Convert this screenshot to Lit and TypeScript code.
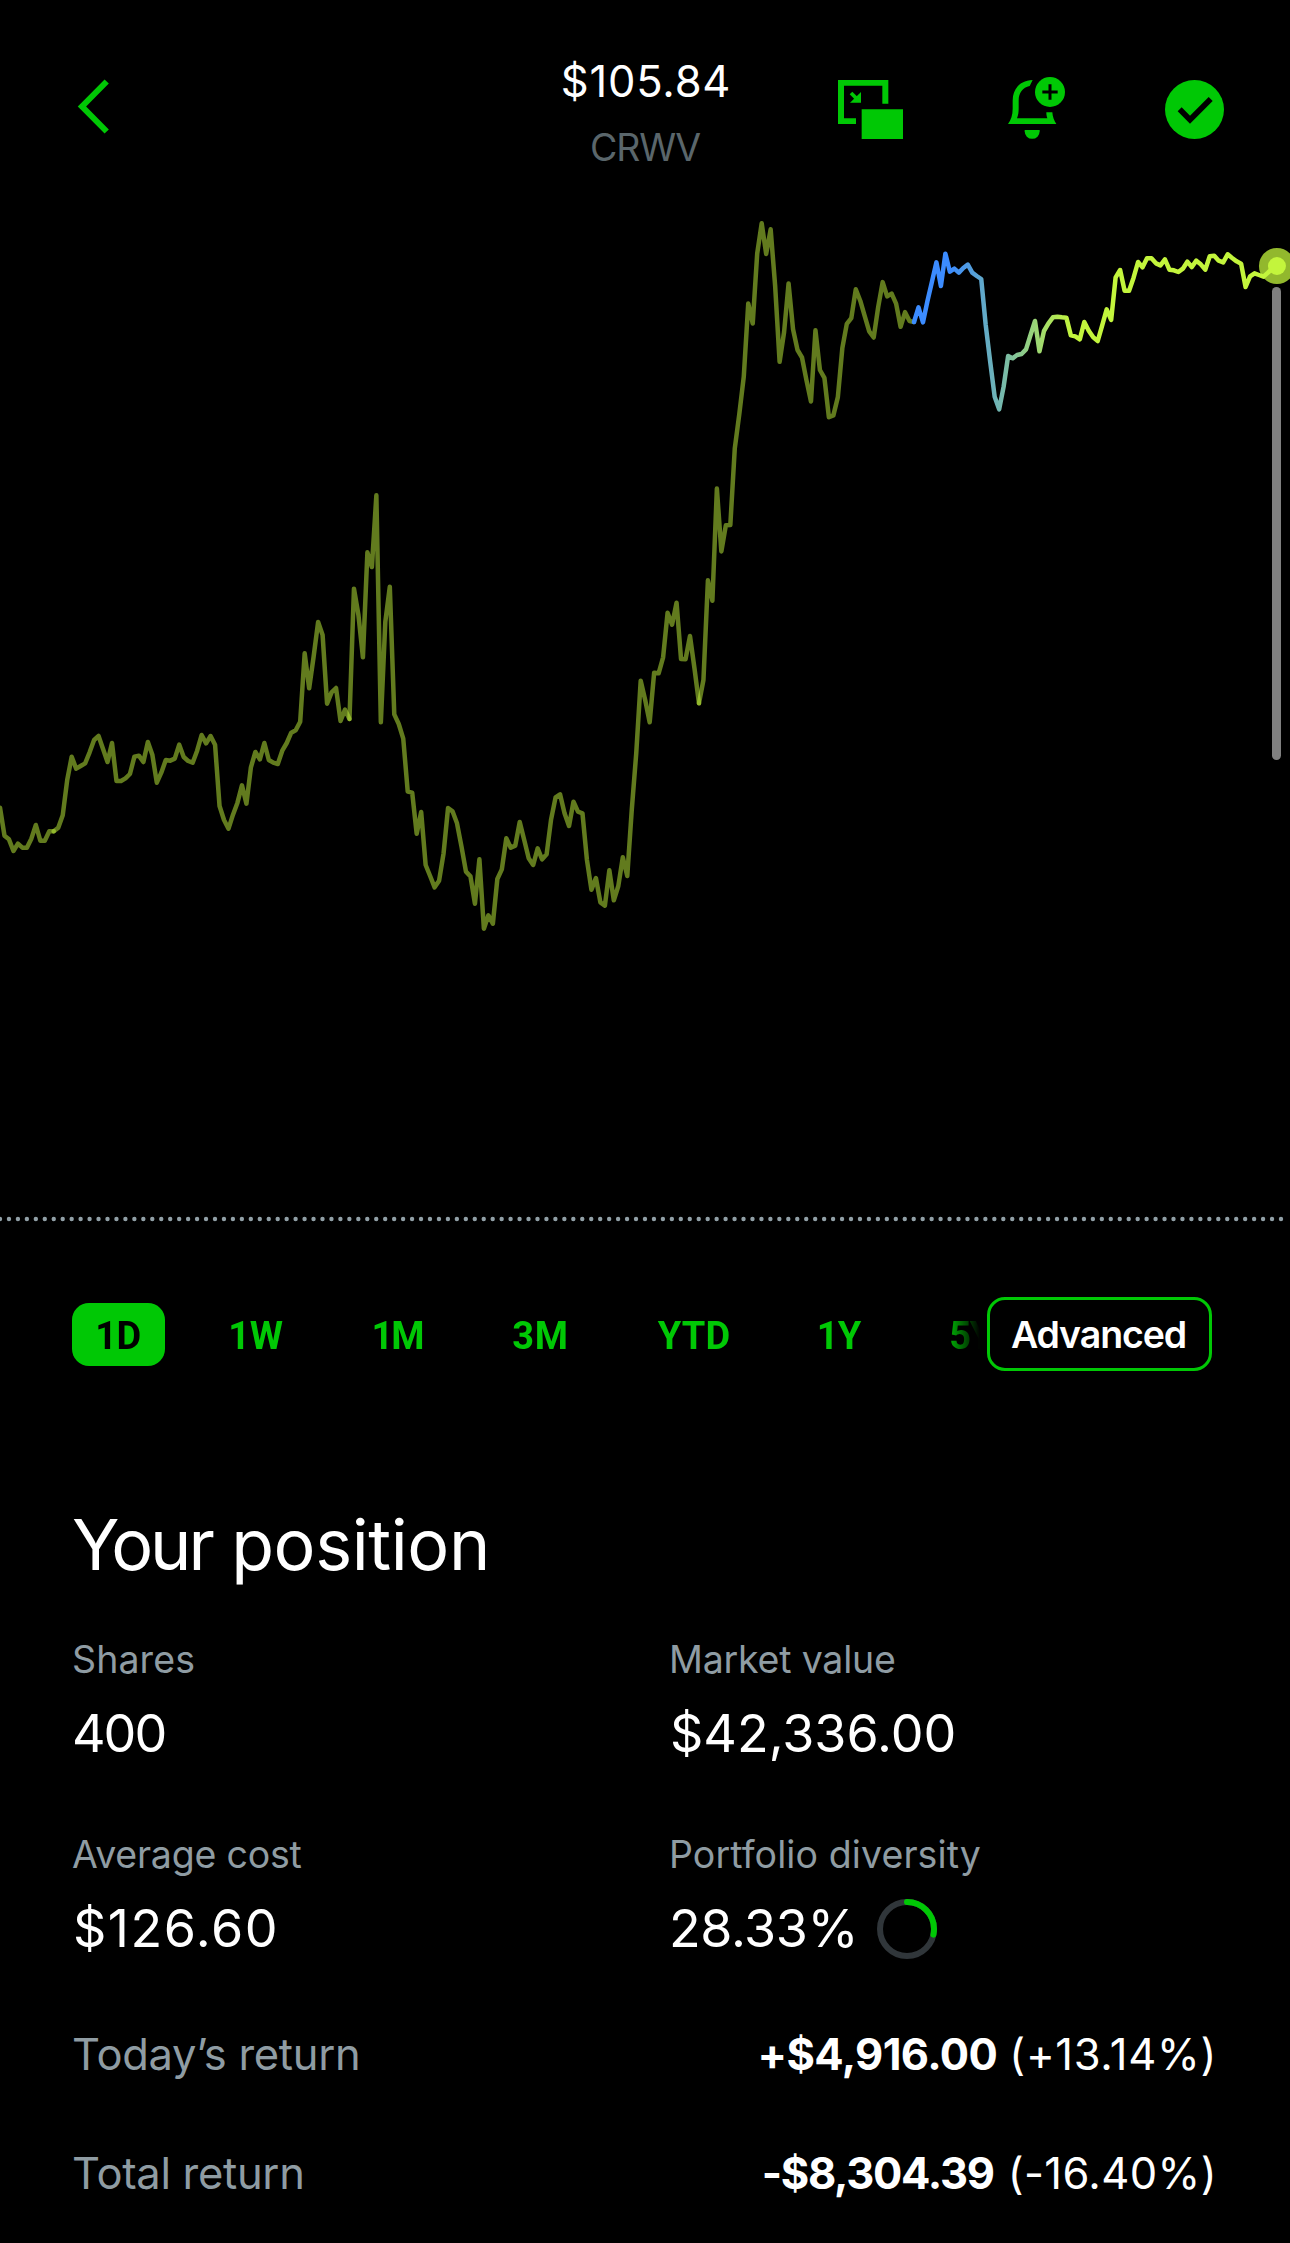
import { LitElement, html, svg, css } from "lit";
import { customElement, property } from "lit/decorators.js";
import { classMap } from "lit/directives/class-map.js";
import { styleMap } from "lit/directives/style-map.js";

/** Horizontal distance between two price samples. */
const STEP = 4.4805;

/** Price samples of the day as vertical canvas positions. */
const SAMPLES = [
  // each block is stored in fractions of a pixel relative to its own origin
  {
    origin: 460,
    scale: 3,
    values: [
      1043, 1127, 1138, 1173, 1151, 1163, 1163, 1136, 1095, 1142, 1142, 1114, 1114, 1103, 1066, 960, 890, 926, 918,
      910, 877, 840, 828, 867, 906, 849, 963, 963, 955, 942, 890, 887, 906, 846, 884, 968, 938, 900, 902, 896, 854,
      891, 903, 908, 872, 825, 850, 828, 854, 1038, 1080, 1106, 1064, 1028, 976, 1031, 922, 876, 898, 849, 900, 908,
      912, 872, 849, 818, 811, 785, 580, 685, 590, 486, 525, 731, 697, 684, 783, 749, 777, 386, 465, 592, 277, 321,
      106, 787, 485, 380, 763, 792, 836, 995, 998, 1121, 1056, 1215, 1248, 1282, 1262, 1180, 1044, 1054, 1090, 1160,
      1235, 1249, 1331, 1198, 1406, 1366, 1391, 1257, 1228, 1135, 1163, 1157, 1086, 1140, 1195, 1215, 1165, 1198,
      1183, 1078, 1012, 1003, 1060, 1098, 1025, 1055, 1060, 1200, 1289, 1254, 1327, 1337, 1231, 1321, 1278, 1192,
      1248, 1050, 880, 662, 720, 787, 638, 640, 592, 458, 494, 428, 597, 598, 528, 625, 730, 660,
    ],
  },
  {
    origin: 200,
    scale: 2.8,
    values: [
      1065, 1122, 808, 984, 911, 910, 695, 600, 495, 290, 346, 150, 65, 151, 82, 240, 453, 370, 234, 362, 420, 441,
      505, 564, 365, 476, 498, 608, 603, 552, 415, 347, 331, 250, 282, 325, 368, 385, 300, 230, 270, 262, 290, 355,
      314, 339,
    ],
  },
  {
    origin: 220,
    scale: 3,
    values: [
      306, 262, 307, 243, 185, 127, 198, 101, 155, 146, 158, 144, 134, 158, 168, 177, 315, 425, 530, 568, 500, 408,
      415, 405, 402, 388, 345, 303, 394, 333, 310, 292, 290, 292, 293, 346, 349, 358, 306, 332, 352, 363, 316, 268,
      300, 172, 150, 212, 212, 173, 126, 142, 115, 115, 130, 136, 118, 149, 151, 156, 146, 125, 141, 122, 133, 149,
      109, 107, 122, 127, 103, 114, 124, 131, 201, 169, 160, 165, 170, 158, 145, 138,
    ],
  },
].flatMap((b) => b.values.map((v) => b.origin + v / b.scale));

/** Sample indexes where one trading session hands over to the next. */
const SESSIONS = [0, 12, 78, 156, 204];

const slice = (from: number, to: number) =>
  SAMPLES.slice(from, to + 1)
    .map((y, i) => `${((from + i) * STEP).toFixed(2)},${y.toFixed(2)}`)
    .join(" ");

@customElement("price-chart")
class PriceChart extends LitElement {
  static styles = css`
    :host { display: block; }
    svg { display: block; width: 1290px; height: 1040px; }
    .line { fill: none; stroke-width: 4.5; stroke-linecap: round; stroke-linejoin: round; }
    .past { stroke: #c3f53c; stroke-opacity: 0.5; }
    .live { stroke: url(#live); }
    .baseline { stroke: #91a0a7; stroke-width: 4.4; stroke-linecap: round; stroke-dasharray: 0 8.958; }
    .cursor { fill: #808080; }
    .halo { fill: #92b82d; }
    .dot { fill: #c3f53c; }
  `;

  render() {
    const last = SAMPLES.length - 1;
    const x = last * STEP;
    const y = SAMPLES[last];
    return html`
      <svg viewBox="0 190 1290 1040">
        <defs>
          <linearGradient id="live" gradientUnits="userSpaceOnUse" x1="950" y1="0" x2="1072" y2="0">
            <stop offset="0" stop-color="#3c8cff"></stop>
            <stop offset="1" stop-color="#c3f53c"></stop>
          </linearGradient>
        </defs>
        ${SESSIONS.slice(1).map(
          (end, i) => svg`<polyline class="line past" points=${slice(SESSIONS[i], end)}></polyline>`
        )}
        <circle class="halo" cx=${x} cy=${y} r="18"></circle>
        <polyline class="line live" points=${slice(204, last)}></polyline>
        <circle class="dot" cx=${x} cy=${y} r="9"></circle>
        <rect class="cursor" x="1272" y="287" width="9" height="473" rx="4.5"></rect>
        <line class="baseline" x1="0" y1="1219" x2="1284" y2="1219"></line>
      </svg>
    `;
  }
}

@customElement("top-bar")
class TopBar extends LitElement {
  static styles = css`
    :host { display: grid; grid-template-columns: 1fr auto 1fr; height: 190px; }
    svg { display: block; fill: #00c805; }
    .back { padding: 78px 0 0 76px; }
    .chevron { fill: none; stroke: #00c805; stroke-width: 6; }
    .title { display: flex; flex-direction: column; align-items: center; padding-top: 51px; }
    .price { font-size: 43.5px; line-height: 60px; letter-spacing: 0.8px; font-weight: 400; padding-left: 2px; }
    .symbol { font-size: 37.5px; line-height: 48px; margin-top: 13px; letter-spacing: -1.1px; font-weight: 380; color: #5a666b; }
    .actions { display: flex; justify-content: flex-end; padding: 77px 66px 0 0; }
    .bell { margin: 0 100px 0 105px; }
    .cut { fill: none; stroke: #000; }
    .arrow { stroke: #00c805; stroke-width: 11; }
  `;

  render() {
    return html`
      <div class="back">
        <svg width="36" height="58" viewBox="76 78 36 58">
          <polyline class="chevron" points="106.7,81.5 82,106.5 106.7,131.5"></polyline>
        </svg>
      </div>
      <div class="title">
        <div class="price">$105.84</div>
        <div class="symbol">CRWV</div>
      </div>
      <div class="actions">
        <svg width="65" height="62" viewBox="114 81 195 186">
          <path d="M114 90H265V161H247V107H132V205H168V222H114Z"></path>
          <path d="M185 178H309V267H185Z"></path>
          <path d="M183 126V158H150Z"></path>
          <path class="arrow" d="M153 129L173 149"></path>
        </svg>
        <svg class="bell" width="57" height="62" viewBox="625 81 171 186">
          <path d="M699 90C662 91 639 116 639 152V176C639 195 634 209 625 222H770C763 212 759 201 758 187H740C740 194 741 199 743 205H652C656 195 657 186 657 174V152C657 128 669 113 690 108Z"></path>
          <path d="M675 240H720V244A22.5 22.5 0 0 1 675 244Z"></path>
          <circle cx="751" cy="126" r="45"></circle>
          <path class="cut" stroke-width="9" d="M728 126H774M751 103V149"></path>
        </svg>
        <svg width="59" height="62" viewBox="1095 81 177 186">
          <circle cx="1183.5" cy="178.5" r="88.5"></circle>
          <path class="cut" stroke-width="17" d="M1139 178L1170 209L1232 147"></path>
        </svg>
      </div>
    `;
  }
}

interface Range {
  label: string;
  width: number;
  tracking: number;
}

@customElement("range-picker")
class RangePicker extends LitElement {
  static styles = css`
    :host { display: flex; align-items: center; padding: 67px 78px 0 72px; }
    .ranges {
      display: flex; gap: 39px; width: 908px; height: 74px; align-items: center; overflow: hidden;
      -webkit-mask-image: linear-gradient(to right, #000 873px, transparent 908px);
      mask-image: linear-gradient(to right, #000 873px, transparent 908px);
    }
    .range {
      flex: none; box-sizing: border-box; height: 63px; line-height: 66px; padding-right: 1px; text-align: center;
      border-radius: 17px; font-family: Roboto, "Liberation Sans", sans-serif; font-size: 38px; font-weight: 670;
      color: #00c805; white-space: nowrap;
    }
    .selected { background: #00c805; color: #000; }
    .advanced {
      flex: none; box-sizing: border-box; width: 225px; height: 74px; margin-left: 7px; line-height: 69px;
      border: 3px solid #00c805; border-radius: 18px; text-align: center; padding-right: 2px;
      font-size: 37.5px; font-weight: 620; letter-spacing: -1.1px;
    }
  `;

  @property() selected = "1D";

  private ranges: Range[] = [
    { label: "1D", width: 93, tracking: -0.4 },
    { label: "1W", width: 104, tracking: -0.4 },
    { label: "1M", width: 101, tracking: -2 },
    { label: "3M", width: 108, tracking: 0.6 },
    { label: "YTD", width: 121, tracking: 0.2 },
    { label: "1Y", width: 90, tracking: -1 },
    { label: "5Y", width: 96, tracking: -1.5 },
  ];

  render() {
    return html`
      <div class="ranges">
        ${this.ranges.map(
          (r) => html`<div
            class=${classMap({ range: true, selected: r.label === this.selected })}
            style=${styleMap({ width: `${r.width}px`, letterSpacing: `${r.tracking}px` })}
          >${r.label}</div>`
        )}
      </div>
      <div class="advanced">Advanced</div>
    `;
  }
}

@customElement("position-summary")
class PositionSummary extends LitElement {
  static styles = css`
    :host { display: block; padding: 131.6px 73px 0 72px; }
    .heading { font-size: 70px; line-height: 84px; letter-spacing: -0.4px; font-weight: 420; }
    .lead { letter-spacing: -3px; }
    .stats { display: grid; grid-template-columns: 597px 1fr; row-gap: 67.3px; margin-top: 49.4px; }
    .label { font-size: 37.5px; line-height: 48px; font-weight: 380; letter-spacing: -0.2px; color: #8f9ca3; }
    .value { display: flex; align-items: center; font-size: 52px; line-height: 60px; margin-top: 19.8px; font-weight: 390; }
    .shares { letter-spacing: -2px; }
    .money { letter-spacing: 0; padding-left: 1px; }
    .cost { letter-spacing: 1.5px; padding-left: 1px; }
    .share { letter-spacing: -0.4px; }
    .wide { letter-spacing: 0.1px; }
    .ring { display: block; width: 60px; height: 60px; margin-left: 19px; }
    .track { fill: none; stroke: #30363a; stroke-width: 6; }
    .arc { fill: none; stroke: #00c805; stroke-width: 6; stroke-linecap: round; }
    .returns { display: flex; flex-direction: column; gap: 59px; margin-top: 65.6px; }
    .row { display: flex; justify-content: space-between; font-size: 43.5px; line-height: 60px; font-weight: 385; }
    .name { color: #8f9ca3; letter-spacing: -0.3px; }
    .amount { font-weight: 650; letter-spacing: -0.6px; }
    .loss { letter-spacing: -1.3px; }
    .percent { margin-left: 12px; letter-spacing: 0.7px; }
    .loss + .percent { margin-left: 14px; letter-spacing: 0.4px; }
  `;

  private ring(share: number) {
    const length = 2 * Math.PI * 27;
    return html`<svg class="ring" viewBox="0 0 60 60">
      <circle class="track" cx="30" cy="30" r="27"></circle>
      <circle class="arc" cx="30" cy="30" r="27" transform="rotate(-90 30 30)"
        stroke-dasharray="${length * share} ${length}"></circle>
    </svg>`;
  }

  render() {
    return html`
      <div class="heading"><span class="lead">Your</span> position</div>
      <div class="stats">
        <div>
          <div class="label wide">Shares</div>
          <div class="value shares">400</div>
        </div>
        <div>
          <div class="label">Market value</div>
          <div class="value money">$42,336.00</div>
        </div>
        <div>
          <div class="label">Average cost</div>
          <div class="value cost">$126.60</div>
        </div>
        <div>
          <div class="label wide">Portfolio diversity</div>
          <div class="value share"><span>28.33%</span>${this.ring(0.2833)}</div>
        </div>
      </div>
      <div class="returns">
        <div class="row">
          <span class="name">Today’s return</span>
          <span><span class="amount">+$4,916.00</span><span class="percent">(+13.14%)</span></span>
        </div>
        <div class="row">
          <span class="name">Total return</span>
          <span><span class="amount loss">-$8,304.39</span><span class="percent">(-16.40%)</span></span>
        </div>
      </div>
    `;
  }
}

@customElement("app-root")
class AppRoot extends LitElement {
  static styles = css`
    :host {
      display: block; box-sizing: border-box; width: 1290px; height: 2243px; overflow: hidden;
      background: #000; color: #fff; font-family: Inter, "Liberation Sans", sans-serif;
    }
  `;

  render() {
    return html`
      <top-bar></top-bar>
      <price-chart></price-chart>
      <range-picker></range-picker>
      <position-summary></position-summary>
    `;
  }
}
